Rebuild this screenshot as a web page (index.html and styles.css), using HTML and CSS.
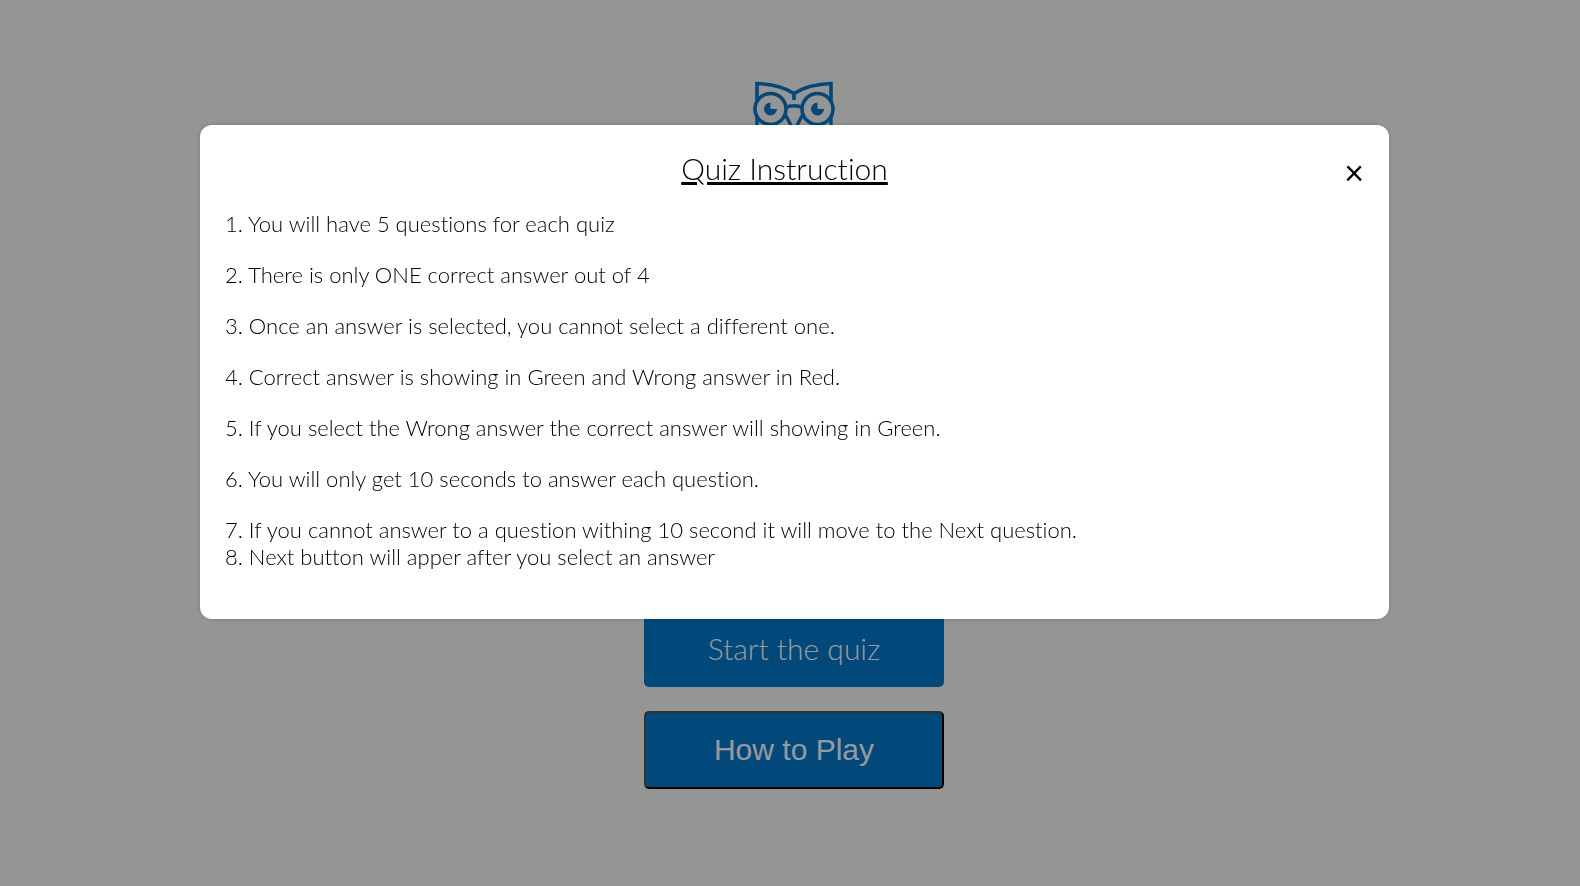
FILE: index.html
```
<!DOCTYPE html>
<html lang="en">
<head>
<meta charset="utf-8">
<title>Quiz</title>
<link rel="stylesheet" href="styles.css">
</head>
<body>
<main class="home">
  <svg class="logo" viewBox="0 0 84 84" fill="none" stroke="#007acb" stroke-width="3.6" aria-hidden="true">
    <path d="M5 22V4.500C18 5 32 8 42 14.500C52 8 66 5 79 4.500V22M42 14V21"/>
    <circle cx="18.500" cy="30" r="15.500"/>
    <circle cx="65.500" cy="30" r="15.500"/>
    <path d="M33 29C38 26 46 26 51 29M33 35L42 52L51 35M5 38V60C5 72 20 80 42 80S79 72 79 60V38" stroke-width="3.400"/>
    <path d="M18.500 23.500A6.500 6.500 0 1 0 25 30H20A2 2 0 0 1 18.500 27ZM65.500 23.500A6.500 6.500 0 1 0 72 30H67A2 2 0 0 1 65.500 27Z" fill="#007acb" stroke="none"/>
  </svg>
  <nav class="actions">
    <a class="btn btn-start" href="#quiz">Start the quiz</a>
    <button class="btn btn-help" type="button">How to Play</button>
  </nav>
</main>
<div class="overlay">
  <section class="modal" role="dialog" aria-modal="true" aria-labelledby="modal-title">
    <header class="modal-header">
      <h2 class="modal-title" id="modal-title">Quiz Instruction</h2>
      <button class="close" type="button" aria-label="Close">×</button>
    </header>
    <div class="rules">
      <p>1. You will have 5 questions for each quiz</p>
      <p>2. There is only ONE correct answer out of 4</p>
      <p>3. Once an answer is selected, you cannot select a different one.</p>
      <p>4. Correct answer is showing in Green and Wrong answer in Red.</p>
      <p>5. If you select the Wrong answer the correct answer will showing in Green.</p>
      <p>6. You will only get 10 seconds to answer each question.</p>
      <p>7. If you cannot answer to a question withing 10 second it will move to the Next question.<br>8. Next button will apper after you select an answer</p>
    </div>
  </section>
</div>
</body>
</html>
```
FILE: styles.css
```
* { box-sizing: border-box; }
body {
  margin: 0;
  min-height: 100vh;
  background: #f9f9f5;
  font-family: Lato, sans-serif;
  font-weight: 300;
  font-variant-ligatures: none;
  color: #000;
}
.home {
  min-height: 100vh;
  padding: 79px 0 97px 8px;
  display: flex;
  flex-direction: column;
  align-items: center;
  justify-content: space-between;
}
.logo { width: 84px; height: 84px; }
.actions {
  display: flex;
  flex-direction: column;
  gap: 24px;
  width: 300px;
}
.btn {
  height: 78px;
  display: flex;
  align-items: center;
  justify-content: center;
  border-radius: 5px;
  background: #007acb;
  color: #fff;
  font-size: 30px;
  text-decoration: none;
}
.btn-help {
  font-family: "Liberation Sans", Arial, sans-serif;
  font-weight: 400;
  border: 2px solid;
  border-color: #555 #000 #000 #555;
}
.overlay {
  position: fixed;
  inset: 0;
  padding: 125px 191px 0 200px;
  background: rgba(0, 0, 0, 0.4);
}
.modal {
  padding: 25px 25px 49px;
  border-radius: 12px;
  background: #fff;
  box-shadow: 0 0 4px rgba(0, 0, 0, 0.2);
}
.modal-header {
  display: flex;
  align-items: flex-end;
  margin-bottom: 19px;
}
.modal-title {
  flex: 1;
  margin: 0;
  text-align: center;
  font-size: 30px;
  font-weight: 300;
  line-height: 36px;
  padding-bottom: 5px;
  text-decoration: underline;
}
.close {
  width: 20px;
  padding: 0;
  border: 0;
  background: none;
  font: 400 34px/38px Lato, sans-serif;
  color: #000;
}
.rules {
  font-size: 22px;
  line-height: 27px;
}
.rules p { margin: 0 0 24px; }
.rules p:last-child { margin: 0; }
```
